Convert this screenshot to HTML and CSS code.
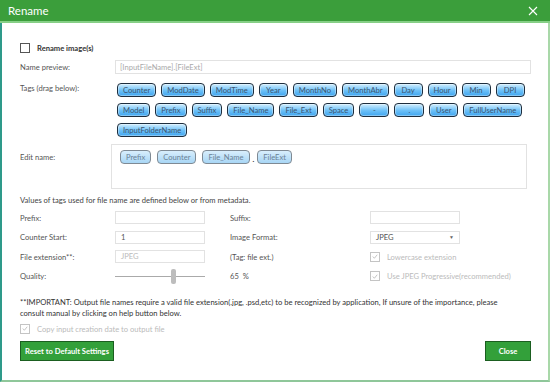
FILE: index.html
```html
<!DOCTYPE html>
<html lang="en">
<head>
	<meta charset="UTF-8">
	<title>Rename</title>
	<link rel="stylesheet" href="styles.css">
</head>
<body>
	<div class="window">
		<div class="titlebar">
			<span class="titlebar__title">Rename</span>
			<span class="titlebar__close">
				<svg width="10" height="10" viewBox="0 0 10 10"><path d="M1 1L9 9M9 1L1 9" stroke="#fff" stroke-width="1.1"/></svg>
			</span>
		</div>
		<div class="content">
			<div class="check check--main">
				<span class="box"></span>
				<span class="check__label">Rename image(s)</span>
			</div>

			<div class="field field--preview">
				<div class="label">Name preview:</div>
				<div class="preview">[InputFileName].[FileExt]</div>
			</div>

			<div class="field field--tags">
				<div class="label">Tags (drag below):</div>
				<div class="tags">
					<span class="tag">Counter</span>
					<span class="tag">ModDate</span>
					<span class="tag">ModTime</span>
					<span class="tag">Year</span>
					<span class="tag">MonthNo</span>
					<span class="tag">MonthAbr</span>
					<span class="tag">Day</span>
					<span class="tag">Hour</span>
					<span class="tag">Min</span>
					<span class="tag">DPI</span>
					<span class="tag">Model</span>
					<span class="tag">Prefix</span>
					<span class="tag">Suffix</span>
					<span class="tag">File_Name</span>
					<span class="tag">File_Ext</span>
					<span class="tag">Space</span>
					<span class="tag tag--wide">-</span>
					<span class="tag tag--wide">.</span>
					<span class="tag">User</span>
					<span class="tag">FullUserName</span>
					<span class="tag">InputFolderName</span>
				</div>
			</div>

			<div class="field field--edit">
				<div class="label">Edit name:</div>
				<div class="editbox">
					<span class="tag tag--faded">Prefix</span>
					<span class="tag tag--faded">Counter</span>
					<span class="tag tag--faded">File_Name</span>
					<span class="dot">.</span>
					<span class="tag tag--faded">FileExt</span>
				</div>
			</div>

			<div class="note">Values of tags used for file name are defined below or from metadata.</div>

			<div class="values">
				<div class="label">Prefix:</div>
				<div class="input"></div>
				<div class="label">Suffix:</div>
				<div class="input"></div>

				<div class="label">Counter Start:</div>
				<div class="input">1</div>
				<div class="label">Image Format:</div>
				<div class="input select">JPEG <span class="arrow">&#9660;</span></div>

				<div class="label">File extension**:</div>
				<div class="input input--disabled">JPEG</div>
				<div class="label">(Tag: file ext.)</div>
				<div class="check check--disabled">
					<span class="box box--checked"><svg width="9" height="9" viewBox="0 0 9 9"><path d="M2 4.5L3.8 6.5L7 2.5" fill="none" stroke="#b5b5b5" stroke-width="0.9"/></svg></span>
					<span class="check__label">Lowercase extension</span>
				</div>

				<div class="label">Quality:</div>
				<div class="slider"><span class="slider__track"></span><span class="slider__thumb"></span></div>
				<div class="label">65 &nbsp;%</div>
				<div class="check check--disabled">
					<span class="box box--checked"><svg width="9" height="9" viewBox="0 0 9 9"><path d="M2 4.5L3.8 6.5L7 2.5" fill="none" stroke="#b5b5b5" stroke-width="0.9"/></svg></span>
					<span class="check__label">Use JPEG Progressive(recommended)</span>
				</div>
			</div>

			<p class="important">**IMPORTANT: Output file names require a valid file extension(.jpg, .psd,etc) to be recognized by application, If unsure of the importance, please consult manual by clicking on help button below.</p>

			<div class="check check--disabled check--copy">
				<span class="box box--checked"><svg width="9" height="9" viewBox="0 0 9 9"><path d="M2 4.5L3.8 6.5L7 2.5" fill="none" stroke="#b5b5b5" stroke-width="0.9"/></svg></span>
				<span class="check__label">Copy input creation date to output file</span>
			</div>

			<div class="buttons">
				<div class="btn">Reset to Default Settings</div>
				<div class="btn">Close</div>
			</div>
		</div>
	</div>
</body>
</html>
```

FILE: styles.css
```css
*{
	box-sizing: border-box;
}
body{
	margin: 0;
	font-family: Lato, "Open Sans", sans-serif;
	font-size: 7.6px;
	color: #444;
}
.window{
	width: 550px;
	height: 382px;
	background: #fff;
	border-left: 2px solid #2e9a8a;
	border-right: 2px solid #a9d8a9;
	border-bottom: 2px solid #8fc79a;
	display: flex;
	flex-direction: column;
}
.titlebar{
	height: 23px;
	flex: none;
	background: #3b9e3b;
	border-bottom: 2px solid #86cf86;
	margin-left: -2px;
	margin-right: -2px;
	display: flex;
	align-items: center;
	justify-content: space-between;
	padding: 0 12px 0 8px;
	color: #fff;
}
.titlebar__title{
	font-size: 11.5px;
}
.titlebar__close{
	display: flex;
}
.content{
	padding: 20px 17px 0 18px;
	flex: 1;
	display: flex;
	flex-direction: column;
}
.check{
	display: flex;
	align-items: center;
	gap: 7px;
}
.box{
	width: 10px;
	height: 10px;
	border: 1px solid #555;
	display: flex;
	align-items: center;
	justify-content: center;
	flex: none;
}
.check--main .check__label{
	font-weight: bold;
	color: #333;
}
.check--disabled{
	color: #bbb;
	white-space: nowrap;
}
.box--checked{
	border-color: #c4c4c4;
}
.field{
	display: grid;
	grid-template-columns: 95px 1fr;
	align-items: center;
}
.label{
	color: #555;
}
.field--preview{
	margin-top: 7px;
}
.preview{
	height: 14px;
	border: 1px solid #e2e2e2;
	color: #aaa;
	padding: 0 4px;
	line-height: 12px;
}
.field--tags{
	align-items: start;
	margin-top: 9px;
	padding-bottom: 7px;
}
.tags{
	display: flex;
	flex-wrap: wrap;
	align-content: flex-start;
	gap: 6px 5px;
	padding-left: 2px;
}
.tag{
	flex: none;
	height: 14px;
	min-width: 29px;
	padding: 0 5px;
	border: 1px solid #1e2e3e;
	border-radius: 4px;
	background: linear-gradient(#d2efff, #6cc0f7 55%, #3fa5ef);
	color: #3b5470;
	line-height: 12px;
	text-align: center;
	box-shadow: inset 0 0 0 1px rgba(255,255,255,0.35);
}
.tag--wide{
	width: 30px;
}
.field--edit{
	align-items: start;
}
.field--edit .label{
	margin-top: 8px;
}
.editbox{
	height: 45px;
	border: 1px solid #e2e2e2;
	margin-left: -4px;
	margin-right: 4px;
	display: flex;
	align-items: flex-start;
	gap: 6px;
	padding: 5px 8px;
}
.tag--faded{
	border-color: #7f8a94;
	background: linear-gradient(#d8eefc, #a8d6f5);
	color: #6b8296;
	box-shadow: none;
}
.dot{
	margin: 4px -3px 0 -3px;
	color: #333;
	font-weight: bold;
}
.note{
	margin-top: 6px;
	color: #444;
}
.values{
	display: grid;
	grid-template-columns: 95px 90px 25px 140px 90px;
	grid-auto-rows: 13px;
	row-gap: 6.5px;
	align-items: center;
	margin-top: 6px;
}
.values .label:nth-child(4n+3){
	grid-column: 4;
}
.input{
	height: 13px;
	border: 1px solid #e2e2e2;
	padding: 0 5px;
	line-height: 11px;
	color: #555;
}
.input--disabled{
	color: #bbb;
}
.select{
	display: flex;
	justify-content: space-between;
}
.arrow{
	font-size: 5px;
	color: #666;
}
.slider{
	position: relative;
	height: 13px;
}
.slider__track{
	position: absolute;
	left: 0;
	right: 0;
	top: 6px;
	height: 1px;
	background: #aaa;
}
.slider__thumb{
	position: absolute;
	left: 56px;
	top: -1px;
	width: 5px;
	height: 15px;
	border-radius: 2px;
	background: #bdbdbd;
}
.important{
	margin: 14px 0 0 0;
	line-height: 11px;
	color: #333;
	width: 486px;
}
.check--copy{
	margin-top: 5px;
}
.buttons{
	display: flex;
	justify-content: space-between;
	margin-top: 7px;
}
.btn{
	height: 20px;
	padding: 0 4px;
	background: #33a03a;
	border: 1px solid #1b5e20;
	color: #fff;
	font-weight: bold;
	line-height: 18px;
}
.btn:last-child{
	width: 46px;
	text-align: center;
}
```
